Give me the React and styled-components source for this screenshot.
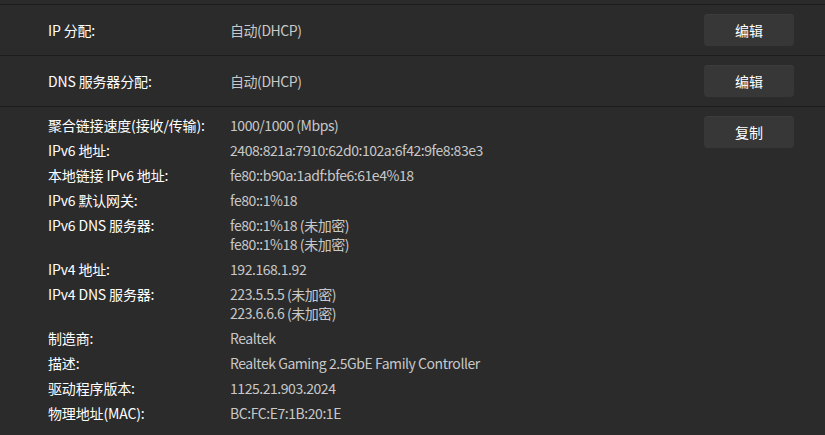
import React from "react";
import styled, { createGlobalStyle } from "styled-components";

const GlobalStyle = createGlobalStyle`
  html, body {
    margin: 0;
    padding: 0;
    background: #2b2b2b;
  }
  body {
    font-family: "Noto Sans CJK SC", "Noto Sans", sans-serif;
    font-size: 14px;
    color: #ffffff;
  }
`;

const Panel = styled.div`
  width: 825px;
  height: 435px;
  overflow: hidden;
  background: #2b2b2b;
  border-top: 4px solid #2b2b2b;
`;

const Row = styled.div`
  display: flex;
  align-items: ${(p) => (p.$top ? "flex-start" : "center")};
  min-height: ${(p) => (p.$top ? "auto" : "50px")};
  padding: ${(p) => (p.$top ? "9px 31px 0 48px" : "0 31px 0 48px")};
  border-top: 1px solid #1d1d1d;
`;

const Label = styled.div`
  width: 182px;
  flex-shrink: 0;
  color: #ffffff;
  line-height: 19px;
  letter-spacing: -0.15px;
`;

const Value = styled.div`
  flex: 1;
  color: #c8c8c8;
  line-height: 19px;
  letter-spacing: -0.45px;
`;

const Button = styled.button`
  width: 90px;
  height: 32px;
  flex-shrink: 0;
  border: none;
  border-radius: 4px;
  background: #373737;
  box-shadow: inset 0 1px 0 #3c3c3c;
  color: #ffffff;
  font-family: inherit;
  font-size: 14px;
  padding: 0;
`;

const DetailList = styled.div`
  flex: 1;
  display: flex;
  flex-direction: column;
  gap: 6px;
`;

const DetailItem = styled.div`
  display: flex;
`;

const details = [
  ["聚合链接速度(接收/传输):", ["1000/1000 (Mbps)"]],
  ["IPv6 地址:", ["2408:821a:7910:62d0:102a:6f42:9fe8:83e3"]],
  ["本地链接 IPv6 地址:", ["fe80::b90a:1adf:bfe6:61e4%18"]],
  ["IPv6 默认网关:", ["fe80::1%18"]],
  ["IPv6 DNS 服务器:", ["fe80::1%18 (未加密)", "fe80::1%18 (未加密)"]],
  ["IPv4 地址:", ["192.168.1.92"]],
  ["IPv4 DNS 服务器:", ["223.5.5.5 (未加密)", "223.6.6.6 (未加密)"]],
  ["制造商:", ["Realtek"]],
  ["描述:", ["Realtek Gaming 2.5GbE Family Controller"]],
  ["驱动程序版本:", ["1125.21.903.2024"]],
  ["物理地址(MAC):", ["BC:FC:E7:1B:20:1E"]],
];

export default function App() {
  return (
    <Panel>
      <GlobalStyle />
      <Row>
        <Label>IP 分配:</Label>
        <Value>自动(DHCP)</Value>
        <Button>编辑</Button>
      </Row>
      <Row>
        <Label>DNS 服务器分配:</Label>
        <Value>自动(DHCP)</Value>
        <Button>编辑</Button>
      </Row>
      <Row $top>
        <DetailList>
          {details.map(([label, lines]) => (
            <DetailItem key={label}>
              <Label>{label}</Label>
              <Value>
                {lines.map((l) => (
                  <div key={l}>{l}</div>
                ))}
              </Value>
            </DetailItem>
          ))}
        </DetailList>
        <Button>复制</Button>
      </Row>
    </Panel>
  );
}
